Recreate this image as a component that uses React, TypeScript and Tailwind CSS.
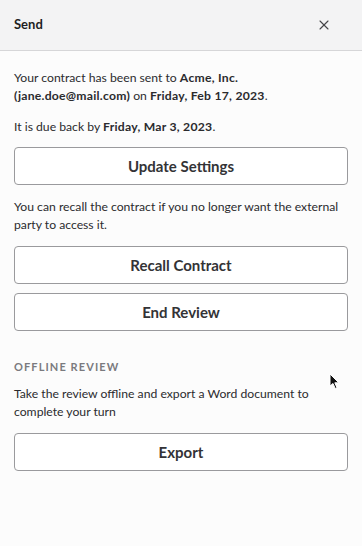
import React from 'react';
import { X } from 'lucide-react';

function ActionButton({ label }: { label: string }) {
  return (
    <button className="w-full h-[38px] rounded-[4px] border border-[#9a9a9d] bg-white text-[15px] font-bold text-[#333336] flex items-center justify-center">
      {label}
    </button>
  );
}

export default function App() {
  return (
    <div
      className="relative w-[362px] h-[546px] bg-[#fcfcfc] text-[#2b2b2e] flex flex-col"
      style={{ fontFamily: 'Lato, "Noto Sans", sans-serif' }}
    >
      <header className="h-[51px] shrink-0 bg-[#f3f3f4] border-b border-[#d6d6d8] flex items-center justify-between pl-[14px] pr-[30px]">
        <h1 className="text-[13px] font-bold text-[#1f1f22]">Send</h1>
        <X className="w-[16px] h-[16px] text-[#444447]" strokeWidth={1.6} />
      </header>

      <div className="px-[14px] pt-[18px] flex flex-col text-[12.2px] leading-[18px]">
        <p>
          Your contract has been sent to <b className="tracking-[0.02em]">Acme, Inc. (jane.doe@mail.com)</b> on{' '}
          <b className="tracking-[0.02em]">Friday, Feb 17, 2023</b>.
        </p>
        <p className="mt-[13px]">
          It is due back by <b className="tracking-[0.02em]">Friday, Mar 3, 2023</b>.
        </p>
        <div className="mt-[11px]">
          <ActionButton label="Update Settings" />
        </div>

        <p className="mt-[13px]">
          You can recall the contract if you no longer want the external party to access it.
        </p>
        <div className="mt-[12px] flex flex-col gap-[9px]">
          <ActionButton label="Recall Contract" />
          <ActionButton label="End Review" />
        </div>

        <h2 className="mt-[27px] text-[11px] font-bold tracking-[0.1em] text-[#7a7a7e]">OFFLINE REVIEW</h2>
        <p className="mt-[9px]">
          Take the review offline and export a Word document to complete your turn
        </p>
        <div className="mt-[12px]">
          <ActionButton label="Export" />
        </div>
      </div>

      <svg className="absolute left-[329px] top-[373px]" width="11" height="17" viewBox="0 0 11 17">
        <path d="M1 1 L1 13 L4 10.5 L6.2 15.5 L8 14.7 L5.8 9.8 L9.8 9.8 Z" fill="#111" stroke="#fff" strokeWidth="1" />
      </svg>
    </div>
  );
}
